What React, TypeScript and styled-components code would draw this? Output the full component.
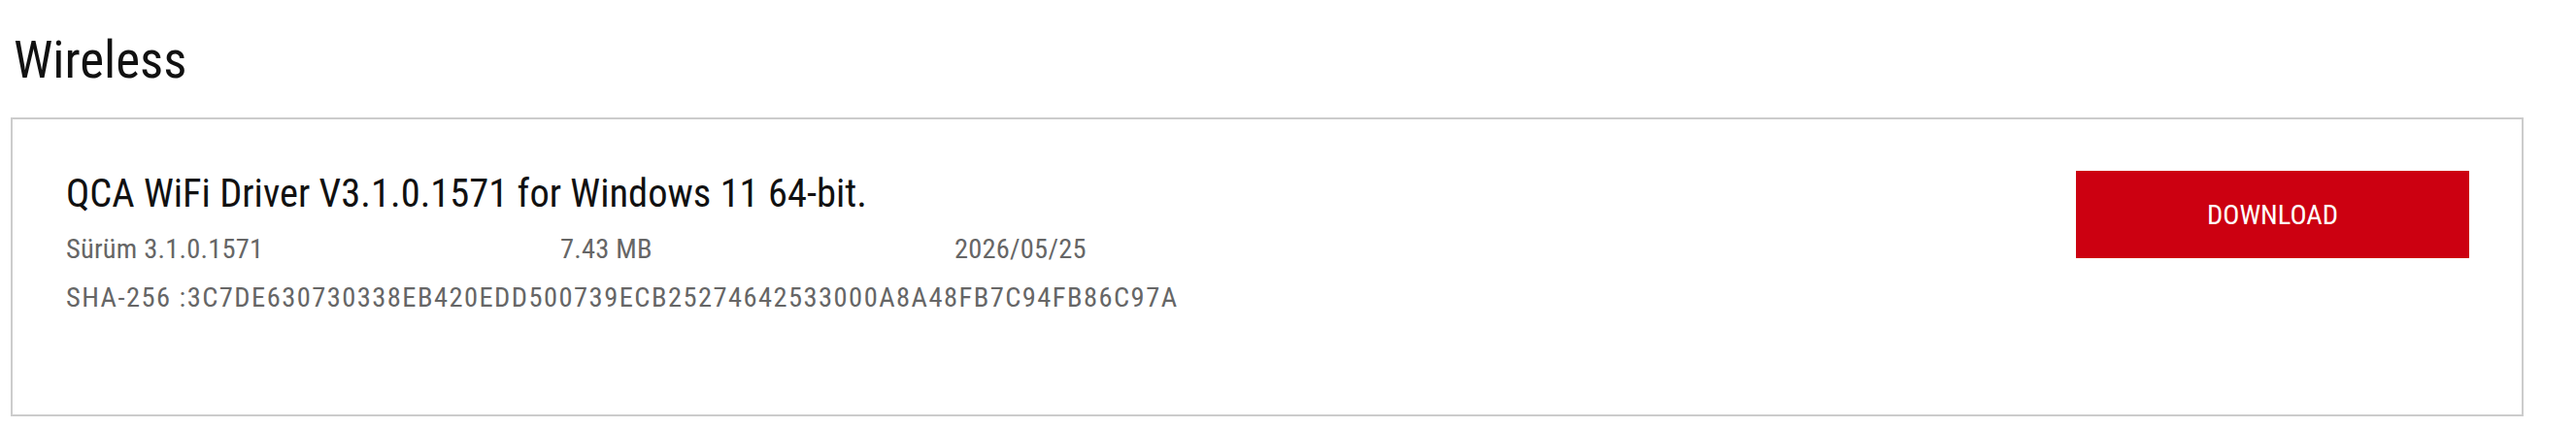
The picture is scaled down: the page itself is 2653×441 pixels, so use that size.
import React from "react";
import styled, { createGlobalStyle } from "styled-components";

const GlobalStyle = createGlobalStyle`
  html, body { margin: 0; padding: 0; background: #ffffff; }
  body {
    font-family: "Roboto Condensed", Roboto, "Liberation Sans Narrow", "Liberation Sans", sans-serif;
    font-stretch: 75%;
    -webkit-font-smoothing: antialiased;
  }
`;

const Page = styled.div`
  padding: 30px 54px 12px 11px;
`;

const Heading = styled.h2`
  margin: 0 0 27px 3px;
  font-size: 53px;
  line-height: 64px;
  font-weight: 400;
  color: #111111;
`;

const Card = styled.div`
  box-sizing: border-box;
  height: 308px;
  border: 2px solid #cccccc;
  padding: 53px 54px 0 55px;
  display: flex;
  justify-content: space-between;
  align-items: flex-start;
`;

const Info = styled.div`
  display: flex;
  flex-direction: column;
`;

const Title = styled.div`
  font-size: 40.5px;
  line-height: 46px;
  color: #111111;
`;

const MetaRow = styled.div`
  display: grid;
  grid-template-columns: 509px 406px auto;
  margin-top: 10px;
  font-size: 28.5px;
  line-height: 50px;
  letter-spacing: 0.2px;
  color: #666666;
`;

const Hash = styled.div`
  font-size: 28.5px;
  line-height: 50px;
  letter-spacing: 1.45px;
  color: #666666;
`;

const DownloadButton = styled.button`
  width: 405px;
  height: 90px;
  padding: 0;
  border: none;
  background: #cc0011;
  color: #ffffff;
  font-family: inherit;
  font-stretch: inherit;
  font-size: 28.5px;
  cursor: pointer;
  text-transform: uppercase;
`;

export default function App() {
  return (
    <>
      <GlobalStyle />
      <Page>
        <Heading>Wireless</Heading>
        <Card>
          <Info>
            <Title>QCA WiFi Driver V3.1.0.1571 for Windows 11 64-bit.</Title>
            <MetaRow>
              <span>Sürüm 3.1.0.1571</span>
              <span>7.43 MB</span>
              <span>2026/05/25</span>
            </MetaRow>
            <Hash>SHA-256 :3C7DE630730338EB420EDD500739ECB25274642533000A8A48FB7C94FB86C97A</Hash>
          </Info>
          <DownloadButton>Download</DownloadButton>
        </Card>
      </Page>
    </>
  );
}
